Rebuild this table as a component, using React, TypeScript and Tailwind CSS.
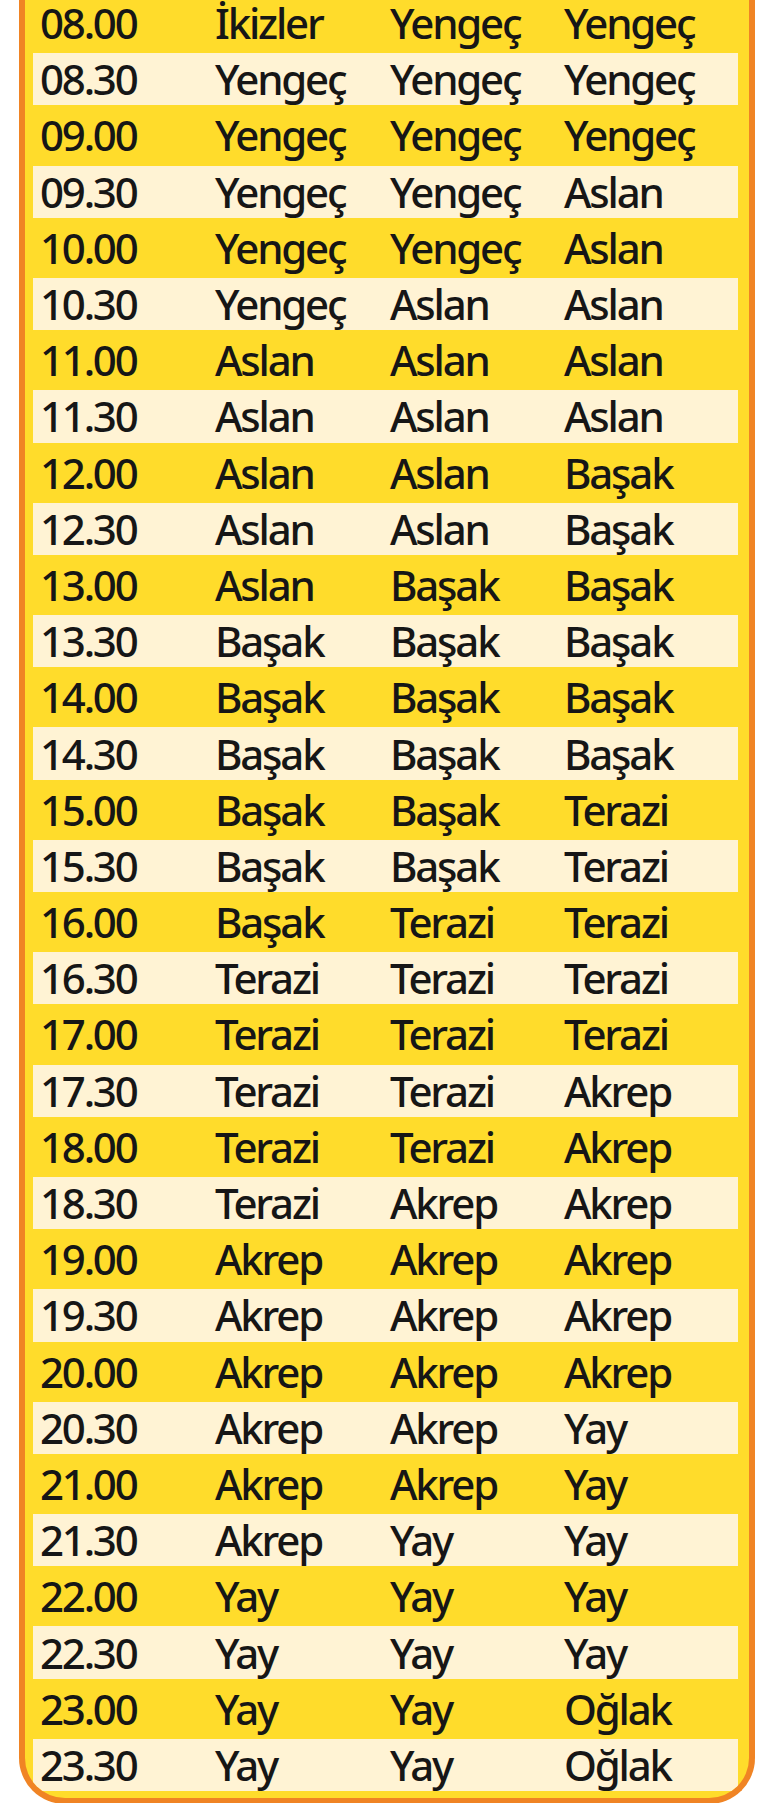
const rows: [string, string, string, string][] = [
  ["08.00", "İkizler", "Yengeç", "Yengeç"],
  ["08.30", "Yengeç", "Yengeç", "Yengeç"],
  ["09.00", "Yengeç", "Yengeç", "Yengeç"],
  ["09.30", "Yengeç", "Yengeç", "Aslan"],
  ["10.00", "Yengeç", "Yengeç", "Aslan"],
  ["10.30", "Yengeç", "Aslan", "Aslan"],
  ["11.00", "Aslan", "Aslan", "Aslan"],
  ["11.30", "Aslan", "Aslan", "Aslan"],
  ["12.00", "Aslan", "Aslan", "Başak"],
  ["12.30", "Aslan", "Aslan", "Başak"],
  ["13.00", "Aslan", "Başak", "Başak"],
  ["13.30", "Başak", "Başak", "Başak"],
  ["14.00", "Başak", "Başak", "Başak"],
  ["14.30", "Başak", "Başak", "Başak"],
  ["15.00", "Başak", "Başak", "Terazi"],
  ["15.30", "Başak", "Başak", "Terazi"],
  ["16.00", "Başak", "Terazi", "Terazi"],
  ["16.30", "Terazi", "Terazi", "Terazi"],
  ["17.00", "Terazi", "Terazi", "Terazi"],
  ["17.30", "Terazi", "Terazi", "Akrep"],
  ["18.00", "Terazi", "Terazi", "Akrep"],
  ["18.30", "Terazi", "Akrep", "Akrep"],
  ["19.00", "Akrep", "Akrep", "Akrep"],
  ["19.30", "Akrep", "Akrep", "Akrep"],
  ["20.00", "Akrep", "Akrep", "Akrep"],
  ["20.30", "Akrep", "Akrep", "Yay"],
  ["21.00", "Akrep", "Akrep", "Yay"],
  ["21.30", "Akrep", "Yay", "Yay"],
  ["22.00", "Yay", "Yay", "Yay"],
  ["22.30", "Yay", "Yay", "Yay"],
  ["23.00", "Yay", "Yay", "Oğlak"],
  ["23.30", "Yay", "Yay", "Oğlak"],
];

export default function App() {
  return (
    <div className="h-[1803px] overflow-hidden bg-white">
      <div className="-mt-[5px] ml-[19px] flex w-[736px] flex-col overflow-hidden rounded-b-[46px] border-x-[6px] border-b-[6px] border-[#f08424] bg-[#ffdc2b] pb-[5px] pl-[8px] pr-[11px] font-['Noto_Sans',sans-serif] text-[42px] font-medium tracking-[-2.2px] text-[#161616]">
        {rows.map((r, i) => (
          <div
            key={r[0]}
            className={
              "my-[2px] flex h-[52.2px] items-center px-[7px] leading-none " +
              (i % 2 === 1 ? "bg-[#fff3d4]" : "")
            }
          >
            <span className="w-[175px]">{r[0]}</span>
            <span className="w-[175px]">{r[1]}</span>
            <span className="w-[174px]">{r[2]}</span>
            <span className="flex-1">{r[3]}</span>
          </div>
        ))}
      </div>
    </div>
  );
}
